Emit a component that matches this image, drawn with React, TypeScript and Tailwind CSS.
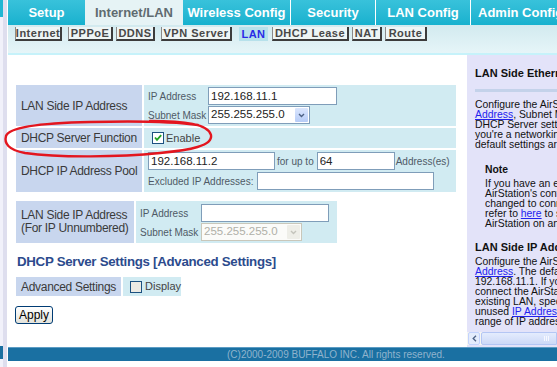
import React from "react";

const topTabs = [
  { label: "Setup", cls: "w-[77px] text-white" },
  { label: "Internet/LAN", cls: "w-[98px] bg-[#e6f3f5] text-[#5f6b70]" },
  { label: "Wireless Config", cls: "w-[107px] text-white" },
  { label: "Security", cls: "w-[85px] text-white border-l border-white" },
  { label: "LAN Config", cls: "w-[95px] text-white border-l border-white" },
  { label: "Admin Config", cls: "flex-1 text-white border-l border-white justify-start pl-[7px]" },
];

const subTabs = [
  { label: "Internet", cls: "ml-[7px] w-[47px]" },
  { label: "PPPoE", cls: "ml-[6px] w-[45px]" },
  { label: "DDNS", cls: "ml-[3px] w-[39px]" },
  { label: "VPN Server", cls: "ml-[6px] w-[71px]" },
  { label: "LAN", cls: "ml-[7px] w-[29px]", active: true },
  { label: "DHCP Lease", cls: "ml-[4px] w-[77px]" },
  { label: "NAT", cls: "ml-[3px] w-[30px]" },
  { label: "Route", cls: "ml-[3px] w-[42px]" },
];

function TextBox({ value, className }: { value: string; className: string }) {
  return (
    <input
      readOnly
      value={value}
      className={`h-[18px] border border-[#7f9db9] bg-white pl-[2px] text-[11.5px] text-[#222] outline-none ${className}`}
    />
  );
}

function Select({ value, className, disabled }: { value: string; className: string; disabled?: boolean }) {
  return (
    <div
      className={`h-[18px] flex items-stretch border ${
        disabled ? "border-[#c9c7ba] bg-[#fbfbf9]" : "border-[#7f9db9] bg-white"
      } ${className}`}
    >
      <span
        className={`flex-1 flex items-center pl-[2px] text-[11.5px] ${
          disabled ? "text-[#b0b0a8]" : "text-[#222]"
        }`}
      >
        {value}
      </span>
      <span
        className={`w-[13px] m-[1px] flex items-center justify-center rounded-[1px] ${
          disabled ? "bg-[#eeeee8]" : "bg-gradient-to-b from-[#dbe6fd] to-[#b6ccf7]"
        }`}
      >
        <svg width="7" height="5" viewBox="0 0 7 5">
          <path d="M1 1 L3.5 3.5 L6 1" fill="none" stroke={disabled ? "#c4c4bc" : "#4d6185"} strokeWidth="1.4" />
        </svg>
      </span>
    </div>
  );
}

function CheckBox({ checked }: { checked?: boolean }) {
  return (
    <svg width="12" height="12" viewBox="0 0 12 12" className="shrink-0">
      <rect x="0.5" y="0.5" width="11" height="11" fill={checked ? "#fff" : "#eceae3"} stroke="#1c5180" />
      {checked && <path d="M3 5.5 L5 7.8 L9.2 3.2" fill="none" stroke="#21a121" strokeWidth="1.8" />}
    </svg>
  );
}

const labelCls = "bg-[#c8d6ee] flex items-center pl-[5px] text-[12px] tracking-[-0.3px] text-[#3a3a3a]";
const valueCls = "bg-[#d1ebf2]";
const smallCls = "text-[10px] text-[#4f5a66]";

function HelpLine({ children, indent }: { children: React.ReactNode; indent?: boolean }) {
  return (
    <div className={`h-[10px] leading-[10px] whitespace-nowrap text-[10.4px] text-[#111] ${indent ? "pl-[18px]" : "pl-[8px]"}`}>
      {children}
    </div>
  );
}

function Link({ children }: { children: React.ReactNode }) {
  return <span className="text-[#2222ee] underline">{children}</span>;
}

export default function App() {
  return (
    <div className="relative w-[557px] h-[367px] overflow-hidden flex bg-white font-['Liberation_Sans',Arial,sans-serif]">
      {/* window behind */}
      <div className="w-[3px] shrink-0 flex flex-col bg-[#f1f1fa]">
        <div className="h-[17px] bg-[#20b6d3]" />
        <div className="flex-1" />
        <div className="h-[13px] bg-[#1a6fa0] mb-[8px]" />
      </div>
      <div className="w-[4px] shrink-0 bg-[#dedeee]" />
      <div className="w-[1px] shrink-0 bg-white" />

      <div className="w-[549px] shrink-0 flex flex-col">
        {/* top tabs */}
        <div className="h-[25px] flex bg-gradient-to-b from-[#38c2db] to-[#16b1ce]">
          {topTabs.map((t) => (
            <div key={t.label} className={`shrink-0 flex items-center justify-center text-[13px] font-bold whitespace-nowrap ${t.cls}`}>
              {t.label}
            </div>
          ))}
        </div>

        {/* sub tabs */}
        <div className="h-[28px] bg-gradient-to-b from-[#d2eaef] to-[#e6f5f8] pt-[2px]">
          <div className="flex">
            {subTabs.map((t) =>
              t.active ? (
                <div
                  key={t.label}
                  className={`shrink-0 h-[14px] flex items-center justify-center bg-[#b7e1eb] text-[11px] font-bold tracking-[0.5px] text-[#2a2ae6] ${t.cls}`}
                >
                  {t.label}
                </div>
              ) : (
                <div
                  key={t.label}
                  className={`shrink-0 h-[14px] flex items-center justify-center bg-[#eef5f5] border-l border-l-[#8a8a8a] border-r-2 border-b-2 border-r-[#3c3c3c] border-b-[#3c3c3c] text-[11px] font-bold tracking-[0.5px] text-[#484848] ${t.cls}`}
                >
                  {t.label}
                </div>
              )
            )}
          </div>
        </div>
        <div className="h-[2px] bg-[#c6f2fa]" />

        <div className="h-[292px] flex">
          {/* main settings */}
          <div className="w-[459px] shrink-0 pl-[8px] pt-[30px] flex flex-col">
            <div className="grid grid-cols-[126px_312px] grid-rows-[41px_20px_42px] gap-[2px]">
              <div className={labelCls}>LAN Side IP Address</div>
              <div className={`${valueCls} pl-[4px] pt-[2px] flex flex-col gap-[1px]`}>
                <div className="flex items-center">
                  <span className={`w-[60px] ${smallCls}`}>IP Address</span>
                  <TextBox value="192.168.11.1" className="w-[129px]" />
                </div>
                <div className="flex items-center">
                  <span className={`w-[60px] ${smallCls}`}>Subnet Mask</span>
                  <Select value="255.255.255.0" className="w-[102px]" />
                </div>
              </div>

              <div className={labelCls}>DHCP Server Function</div>
              <div className={`${valueCls} pl-[8px] flex items-center gap-[2px]`}>
                <CheckBox checked />
                <span className="text-[11px] text-[#444]">Enable</span>
              </div>

              <div className={labelCls}>DHCP IP Address Pool</div>
              <div className={`${valueCls} pl-[4px] pt-[2px] flex flex-col gap-[2px]`}>
                <div className="flex items-center">
                  <TextBox value="192.168.11.2" className="w-[127px]" />
                  <span className={`ml-[2px] ${smallCls}`}>for up to</span>
                  <TextBox value="64" className="ml-[3px] w-[78px]" />
                  <span className={`ml-[1px] ${smallCls}`}>Address(es)</span>
                </div>
                <div className="flex items-center">
                  <span className={`w-[109px] ${smallCls}`}>Excluded IP Addresses:</span>
                  <TextBox value="" className="w-[177px] h-[17px]" />
                </div>
              </div>
            </div>

            <div className="mt-[9px] grid grid-cols-[118px_201px] h-[42px] gap-[2px]">
              <div className={`${labelCls} flex-col items-start justify-center leading-[13px]`}>
                <span>LAN Side IP Address</span>
                <span>(For IP Unnumbered)</span>
              </div>
              <div className={`${valueCls} pl-[4px] pt-[3px] flex flex-col gap-[1px]`}>
                <div className="flex items-center">
                  <span className={`w-[61px] ${smallCls}`}>IP Address</span>
                  <TextBox value="" className="w-[128px]" />
                </div>
                <div className="flex items-center">
                  <span className={`w-[61px] ${smallCls}`}>Subnet Mask</span>
                  <Select value="255.255.255.0" className="w-[101px]" disabled />
                </div>
              </div>
            </div>

            <div className="mt-[11px] h-[16px] flex items-center text-[13.3px] font-bold tracking-[-0.3px] text-[#2c4b8d] pl-[1px]">
              DHCP Server Settings [Advanced Settings]
            </div>

            <div className="mt-[7px] grid grid-cols-[105px_58px] h-[19px] gap-[2px]">
              <div className={labelCls}>Advanced Settings</div>
              <div className={`${valueCls} pl-[7px] flex items-center gap-[3px]`}>
                <CheckBox />
                <span className="text-[11px] text-[#444]">Display</span>
              </div>
            </div>

            <button className="mt-[10px] ml-[-1px] w-[38px] h-[18px] rounded-[3px] border border-[#003c74] bg-gradient-to-b from-white to-[#e3e3dc] text-[12px] text-black leading-none">
              Apply
            </button>
          </div>

          {/* help panel */}
          <div className="w-[90px] shrink-0 bg-[#e3e3f9] flex flex-col overflow-hidden">
            <div className="mt-[12px] pl-[8px] h-[12px] leading-[12px] whitespace-nowrap text-[11px] font-bold text-[#111]">
              LAN Side Ethernet Settings
            </div>
            <div className="mt-[10px] ml-[8px] h-[3px] bg-[#c4d2ea]" />
            <div className="mt-[8px]">
              <HelpLine>Configure the AirStation's LAN side IP</HelpLine>
              <HelpLine>
                <Link>Address</Link>, Subnet Mask, and
              </HelpLine>
              <HelpLine>DHCP Server settings here. Unless</HelpLine>
              <HelpLine>you're a networking expert, the</HelpLine>
              <HelpLine>default settings are recommended.</HelpLine>
            </div>
            <div className="mt-[15px] pl-[18px] h-[10px] leading-[10px] text-[10.4px] font-bold text-[#111]">Note</div>
            <div className="mt-[4px]">
              <HelpLine indent>If you have an existing router, the</HelpLine>
              <HelpLine indent>AirStation's configuration must be</HelpLine>
              <HelpLine indent>changed to connect as a client;</HelpLine>
              <HelpLine indent>
                refer to <Link>here</Link> to set up the
              </HelpLine>
              <HelpLine indent>AirStation on an existing network.</HelpLine>
            </div>
            <div className="mt-[12px] pl-[8px] h-[12px] leading-[12px] whitespace-nowrap text-[11px] font-bold text-[#111]">
              LAN Side IP Address
            </div>
            <div className="mt-[4px]">
              <HelpLine>Configure the AirStation's LAN side IP</HelpLine>
              <HelpLine>
                <Link>Address</Link>. The default is
              </HelpLine>
              <HelpLine>192.168.11.1. If you want to</HelpLine>
              <HelpLine>connect the AirStation to an</HelpLine>
              <HelpLine>existing LAN, specify an</HelpLine>
              <HelpLine>
                unused <Link>IP Address</Link> within the
              </HelpLine>
              <HelpLine>range of IP addresses</HelpLine>
            </div>
            <div className="mt-[5px] h-[13px] flex bg-[#f6f6f2]">
              <div className="w-[12px] ml-[1px] flex items-center justify-center bg-[#e4ecfc] border border-[#c3d3fd] rounded-[2px]">
                <svg width="5" height="7" viewBox="0 0 5 7">
                  <path d="M4 0.8 L1.2 3.5 L4 6.2" fill="none" stroke="#4d6185" strokeWidth="1.3" />
                </svg>
              </div>
              <div className="flex-1 ml-[1px] flex items-center justify-end pr-[6px] bg-gradient-to-b from-[#e4ecfd] to-[#cdd9f7] border border-[#b4c6f4] rounded-l-[2px]">
                <svg width="6" height="5" viewBox="0 0 6 5">
                  <path d="M0.5 0 V5 M2.5 0 V5 M4.5 0 V5" stroke="#f6f8ff" strokeWidth="1" />
                </svg>
              </div>
            </div>
            <div className="flex-1" />
          </div>
        </div>

        {/* footer */}
        <div className="h-[14px] bg-[#1a70a2] border-t border-t-[#5c9cc4] flex items-center pl-[219px] whitespace-nowrap text-[10px] text-[#8fb3cd]">
          (C)2000-2009 BUFFALO INC. All rights reserved.
        </div>
        <div className="flex-1 bg-white" />
      </div>

      {/* hand-drawn annotation */}
      <svg className="absolute left-0 top-0 pointer-events-none" width="557" height="367" viewBox="0 0 557 367">
        <path
          d="M150 121 C185 121 208 124 211 135 C213 146 190 150 160 153 C120 157 60 158 25 153 C8 150 4 143 6 136 C9 127 40 123 90 122 C130 121 170 121 198 125"
          fill="none"
          stroke="#e3161f"
          strokeWidth="2.4"
          strokeLinecap="round"
        />
      </svg>
    </div>
  );
}
